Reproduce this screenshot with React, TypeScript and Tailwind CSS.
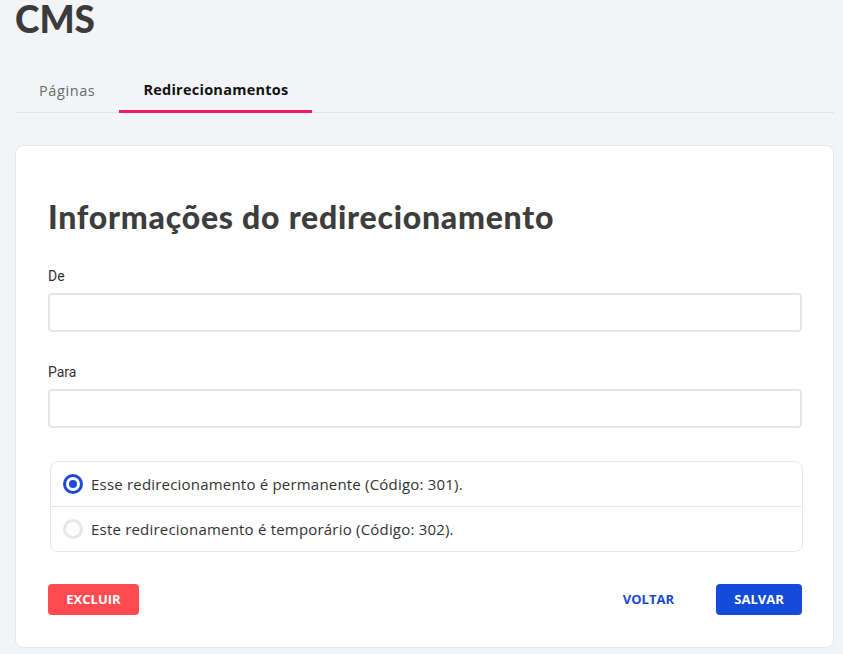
import React from "react";

export default function App() {
  const heading = { fontFamily: "Lato, 'Open Sans', sans-serif" };
  const body = { fontFamily: "'Open Sans', Lato, sans-serif" };
  return (
    <div className="min-h-[654px] w-full bg-[#f3f4f6] pl-[15px] pr-[9px]" style={body}>
      <h1
        className="m-0 pt-[1px] text-[37px] font-black leading-[36px] text-[#3b3b3b]"
        style={heading}
      >
        CMS
      </h1>
      <div className="mt-[33px] flex border-b border-[#e2e3e6]">
        <button className="h-[42px] px-6 text-[14.5px] font-medium tracking-[0.6px] text-[#6b6b6b]">Páginas</button>
        <button className="-mb-px h-[43px] border-b-[3px] border-[#ee1b63] px-6 text-[14.5px] font-bold tracking-[0.25px] text-[#111]">
          Redirecionamentos
        </button>
      </div>
      <div className="mt-[32px] rounded-lg border border-[#e5e7eb] bg-white pl-[32px] pr-[31px] pt-[51px] pb-[32px]">
        <h2 className="text-[32px] font-black leading-[40px] tracking-[0.75px] text-[#3d3d3d]" style={heading}>
          Informações do redirecionamento
        </h2>
        <div className="mt-[29px]">
          <label className="block text-[14px] leading-[20px] text-[#333]" style={{ fontFamily: "Roboto, sans-serif" }}>
            De
          </label>
          <input className="mt-[7px] block h-[39px] w-full rounded border-2 border-[#e5e5e5] px-3 outline-none" />
        </div>
        <div className="mt-[30px]">
          <label className="block text-[14px] leading-[20px] text-[#333]" style={{ fontFamily: "Roboto, sans-serif" }}>
            Para
          </label>
          <input className="mt-[7px] block h-[39px] w-full rounded border-2 border-[#e5e5e5] px-3 outline-none" />
        </div>
        <div className="mt-[33px] ml-[2px] mr-[-1px] rounded-lg border border-[#e5e7eb]">
          <div className="flex h-[45px] items-center gap-2 border-b border-[#e5e7eb] px-3">
            <span className="flex h-[20px] w-[20px] items-center justify-center rounded-full border-[3px] border-[#1a4bd8]">
              <span className="h-[8px] w-[8px] rounded-full bg-[#1a4bd8]" />
            </span>
            <span className="text-[15px] tracking-[0.2px] text-[#333]">Esse redirecionamento é permanente (Código: 301).</span>
          </div>
          <div className="flex h-[44px] items-center gap-2 px-3">
            <span className="h-[20px] w-[20px] rounded-full border-[3px] border-[#e5e7eb]" />
            <span className="text-[15px] tracking-[0.2px] text-[#333]">Este redirecionamento é temporário (Código: 302).</span>
          </div>
        </div>
        <div className="mt-[32px] flex items-center">
          <button className="h-[31px] w-[91px] rounded bg-[#ff4b4f] text-[13px] font-bold text-white">EXCLUIR</button>
          <div className="flex-1" />
          <button className="h-[31px] px-3 text-[13px] font-bold text-[#1a47d6]">VOLTAR</button>
          <button className="ml-[30px] h-[31px] w-[86px] rounded bg-[#144bd8] text-[13px] font-bold text-white">
            SALVAR
          </button>
        </div>
      </div>
    </div>
  );
}
